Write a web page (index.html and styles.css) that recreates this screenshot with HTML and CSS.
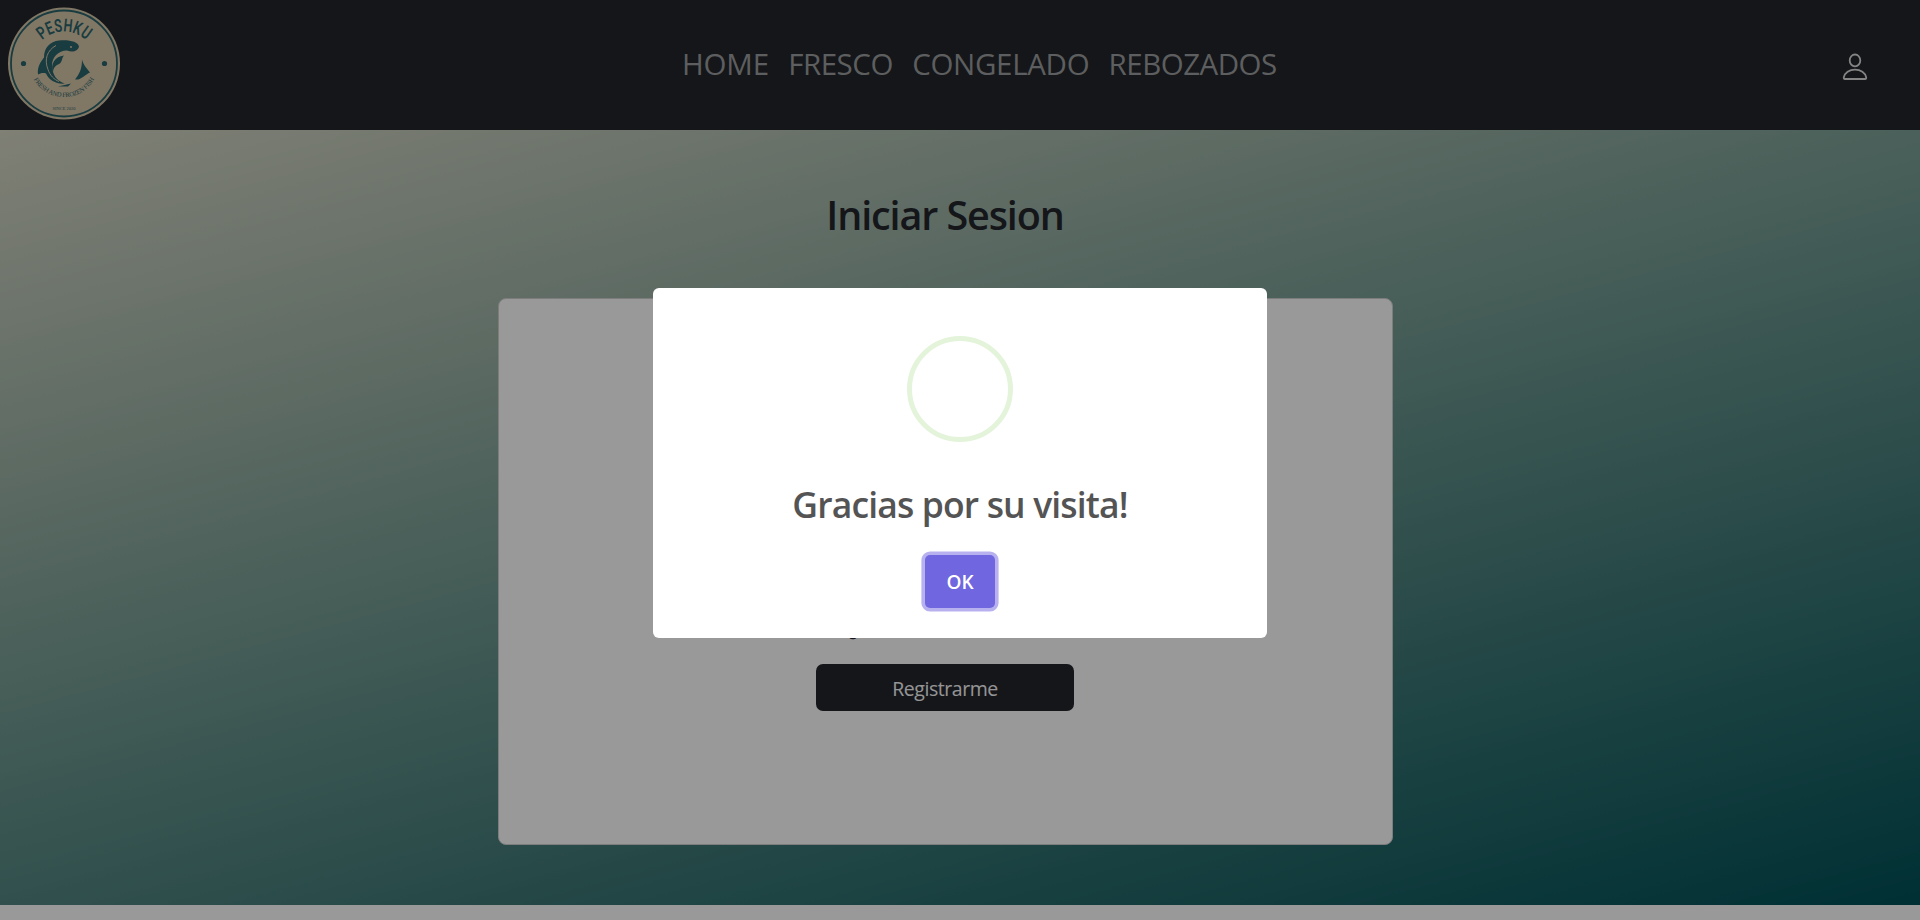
FILE: index.html
```html
<!DOCTYPE html>
<html lang="es">
<head>
<meta charset="utf-8">
<title>Peshku</title>
<link rel="stylesheet" href="styles.css">
</head>
<body>
<header class="navbar">
  <svg class="logo" viewBox="0 0 112 112">
    <defs>
      <path id="arc-top" d="M28.3 40 A32 32 0 0 1 83.7 40"/>
      <path id="arc-bottom" d="M24 68 A34.5 34.5 0 0 0 88 68"/>
    </defs>
    <circle class="logo-disc" cx="56" cy="56" r="56"/>
    <circle class="logo-ring" cx="56" cy="56" r="53"/>
    <circle class="logo-ink" cx="15.5" cy="56" r="2.6"/>
    <circle class="logo-ink" cx="96.5" cy="56" r="2.6"/>
    <text class="logo-name" textLength="48" lengthAdjust="spacingAndGlyphs"><textPath href="#arc-top" startOffset="50%" textLength="48" lengthAdjust="spacingAndGlyphs">PESHKU</textPath></text>
    <path class="logo-ink" d="M30 67 C29 59 33 54 36 50 C36 40 42 34 51 33 C61 32 70 34 71 39 C70 44 64 45 59 43 C50 43 44 50 44 58 C44 67 49 74 57 76 C49 77 41 73 38 66 C35 65 32 66 30 67Z"/>
    <path class="logo-cut" d="M48 38 C39 43 36 52 40 62 C42 68 46 72 51 74"/>
    <path class="logo-ink" d="M45 66 C42 56 47 49 56 48 C53 51 55 55 50 57 C46 59 45 62 45 66Z"/>
    <path class="logo-ink" d="M74 52 C75 57 79 61 82 65 C77 67 73 73 67 72 C71 67 74 62 74 52Z"/>
    <path class="logo-ink" d="M50 79 L63 76 L60 79Z"/>
    <circle class="logo-disc" cx="63" cy="39.5" r="1"/>
    <text class="logo-tag"><textPath href="#arc-bottom" startOffset="50%">FRESH AND FROZEN FISH</textPath></text>
    <text class="logo-since" x="56" y="102">SINCE 2020</text>
  </svg>
  <nav class="menu">
    <a class="menu-home">HOME</a>
    <a class="menu-fresco">FRESCO</a>
    <a class="menu-congelado">CONGELADO</a>
    <a class="menu-rebozados">REBOZADOS</a>
  </nav>
  <svg class="user" viewBox="0 0 26 28">
    <ellipse cx="13" cy="7.4" rx="5.3" ry="5.9"/>
    <path d="M3 26 H23 Q24.4 26 24.2 24.4 C23.4 19.6 18.6 16.6 13 16.6 C7.4 16.6 2.6 19.6 1.8 24.4 Q1.6 26 3 26Z"/>
  </svg>
</header>
<main class="login">
  <h1 class="title">Iniciar Sesion</h1>
  <section class="card">
    <p class="question">¿Aún no tienes cuenta?</p>
    <button class="register">Registrarme</button>
  </section>
</main>
<div class="overlay">
  <div class="modal">
    <div class="success"></div>
    <h2 class="message">Gracias por su visita!</h2>
    <button class="ok">OK</button>
  </div>
</div>
</body>
</html>
```
FILE: styles.css
```css
* { box-sizing: border-box; }
body {
  margin: 0;
  height: 920px;
  overflow: hidden;
  background: #fff;
  font-family: "Segoe UI", "Open Sans", "Noto Sans", sans-serif;
  color: #23252b;
}
button { font-family: inherit; border: 0; }
.navbar {
  display: flex;
  align-items: flex-start;
  height: 130px;
  padding: 7px 52px 0 8px;
  background: #23252b;
}
.logo { width: 112px; height: 113px; }
.logo-disc { fill: #d8c7a9; }
.logo-ring { fill: none; stroke: #2a646b; stroke-width: 1.8; }
.logo-ink { fill: #2a646b; }
.logo-cut { fill: none; stroke: #d8c7a9; stroke-width: 1; }
.logo-name, .logo-tag, .logo-since { fill: #2a646b; text-anchor: middle; }
.logo-name { font: 600 18px "Roboto", sans-serif; }
.logo-tag { font: 6.6px "Liberation Serif", serif; letter-spacing: -0.3px; }
.logo-since { font: 4.5px "Liberation Serif", serif; }
.menu {
  display: flex;
  gap: 19.3px;
  margin: 0 auto 0 562px;
  padding-top: 37px;
  font-size: 29.5px;
  line-height: 40px;
  color: #9b9d9e;
}
.menu-home { letter-spacing: -0.2px; }
.menu-fresco { letter-spacing: -0.45px; }
.menu-congelado { letter-spacing: -0.33px; }
.menu-rebozados { letter-spacing: -0.5px; }
.user {
  width: 26px;
  height: 28px;
  margin-top: 46px;
  fill: none;
  stroke: #ddd;
  stroke-width: 1.8;
}
.login {
  display: flex;
  flex-direction: column;
  align-items: center;
  height: 775px;
  padding-right: 30px;
  background: linear-gradient(165deg, #d5d5c3 0%, #64918a 52%, #005057 100%);
}
.title {
  margin: 58px 0 0;
  font-size: 39.5px;
  font-weight: 600;
  line-height: 54px;
  letter-spacing: -1.1px;
}
.card {
  display: flex;
  flex-direction: column;
  align-items: center;
  width: 895px;
  height: 547px;
  margin-top: 56px;
  padding-top: 316px;
  border: 1px solid #d0d0d0;
  border-radius: 8px;
  background: #fff;
}
.question {
  margin: 0;
  font-size: 18px;
  line-height: 28px;
}
.register {
  width: 258px;
  height: 47px;
  margin-top: 21px;
  padding: 1px 0 0;
  border-radius: 7px;
  background: #23252b;
  color: #f8f9fa;
  font-size: 19.5px;
  letter-spacing: -0.45px;
}
.overlay {
  position: fixed;
  inset: 0;
  display: flex;
  justify-content: center;
  align-items: flex-start;
  padding-top: 288px;
  background: rgba(0, 0, 0, 0.4);
}
.modal {
  display: flex;
  flex-direction: column;
  align-items: center;
  width: 614px;
  height: 350px;
  padding-top: 48px;
  border-radius: 6px;
  background: #fff;
}
.success {
  width: 106px;
  height: 106px;
  border: 5px solid #e4f4db;
  border-radius: 50%;
}
.message {
  margin: 36px 0 0;
  font-size: 35.5px;
  font-weight: 600;
  line-height: 52px;
  letter-spacing: -0.85px;
  color: #545454;
}
.ok {
  width: 70px;
  height: 53px;
  margin-top: 25px;
  border-radius: 5px;
  background: #7066e0;
  box-shadow: 0 0 0 3.6px rgba(112, 102, 224, 0.5);
  color: #fff;
  font-size: 19px;
  font-weight: 600;
}
```
